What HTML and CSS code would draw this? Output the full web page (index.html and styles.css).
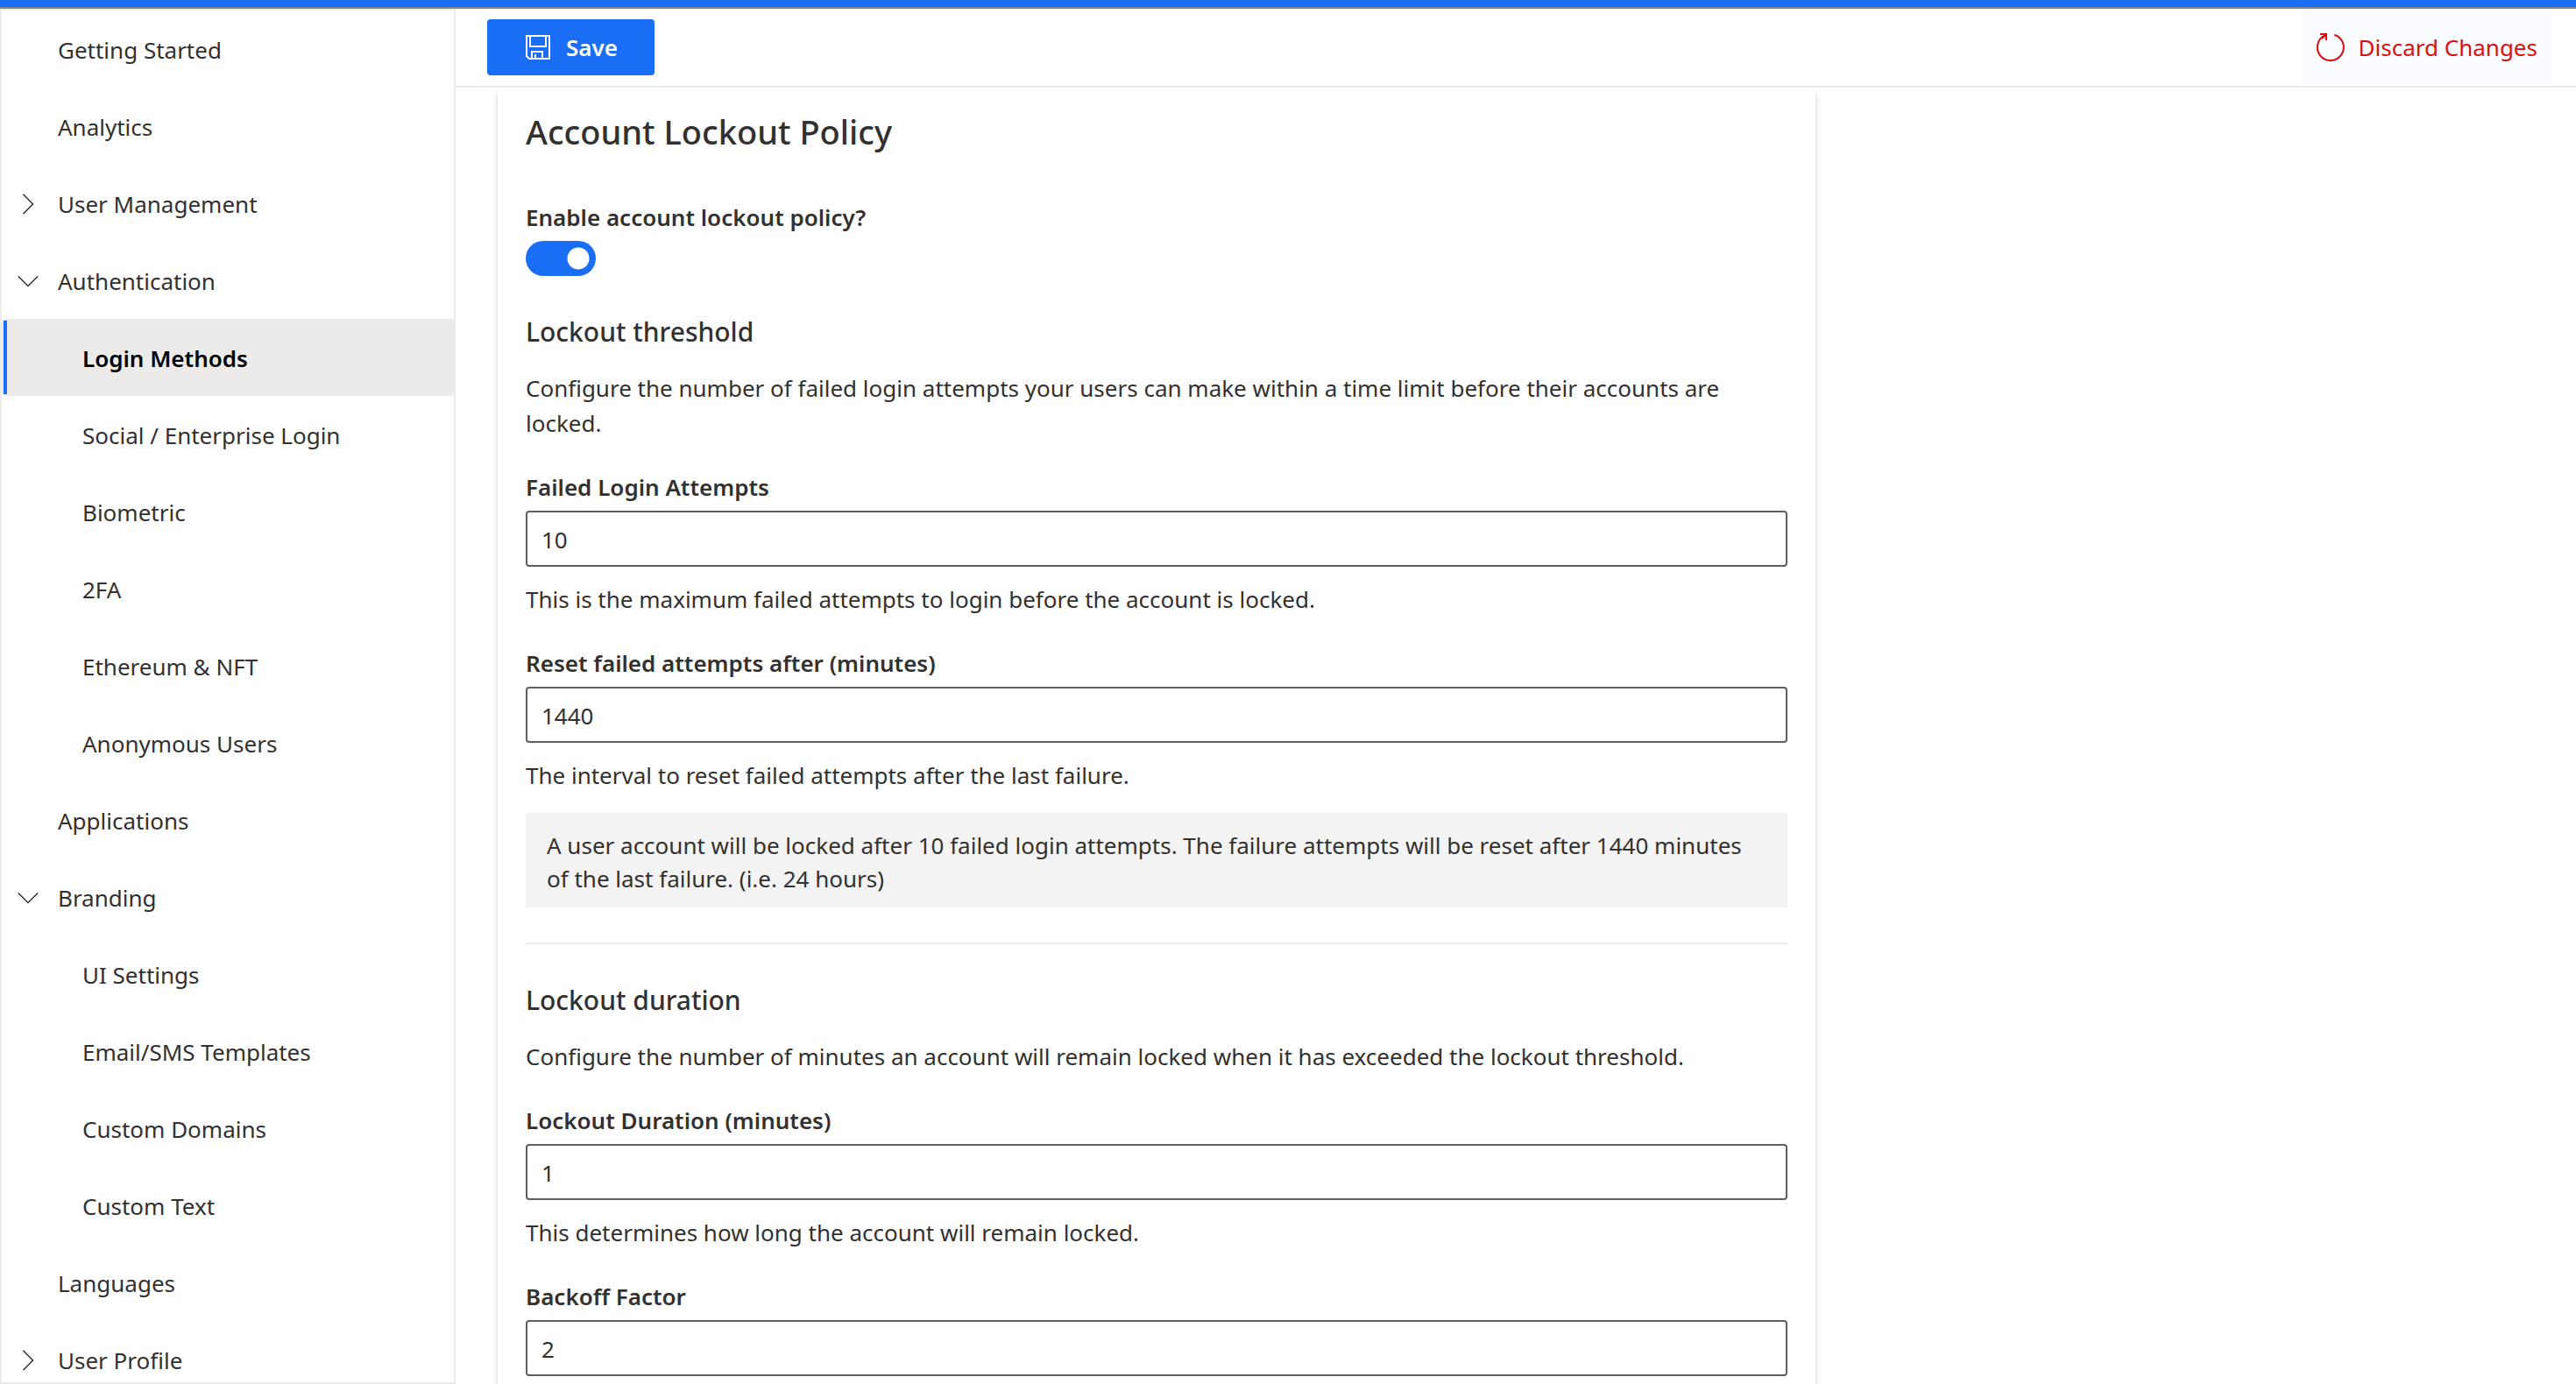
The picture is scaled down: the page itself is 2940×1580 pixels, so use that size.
FILE: index.html
```html
<!DOCTYPE html>
<html lang="en">
<head>
<meta charset="utf-8">
<title>Login Methods</title>
<link rel="stylesheet" href="styles.css">
</head>
<body>
<svg class="sprite" aria-hidden="true">
  <symbol id="chevron-right" viewBox="0 0 24 24"><path d="M6.5 .8 17.5 12 6.5 23.2" fill="none" stroke="currentColor" stroke-width="1.5"/></symbol>
  <symbol id="chevron-down" viewBox="0 0 24 24"><path d="M.8 6.5 12 17.5 23.2 6.5" fill="none" stroke="currentColor" stroke-width="1.5"/></symbol>
</svg>
<header class="topbar"></header>
<div class="shell">
  <nav class="sidebar" aria-label="Main">
    <a class="nav-item" href="#">Getting Started</a>
    <a class="nav-item" href="#">Analytics</a>
    <a class="nav-item nav-group" href="#"><svg class="chevron"><use href="#chevron-right"/></svg>User Management</a>
    <a class="nav-item nav-group" href="#"><svg class="chevron"><use href="#chevron-down"/></svg>Authentication</a>
    <a class="nav-item nav-sub nav-active" href="#" aria-current="page">Login Methods</a>
    <a class="nav-item nav-sub" href="#">Social / Enterprise Login</a>
    <a class="nav-item nav-sub" href="#">Biometric</a>
    <a class="nav-item nav-sub" href="#">2FA</a>
    <a class="nav-item nav-sub" href="#">Ethereum &amp; NFT</a>
    <a class="nav-item nav-sub" href="#">Anonymous Users</a>
    <a class="nav-item" href="#">Applications</a>
    <a class="nav-item nav-group" href="#"><svg class="chevron"><use href="#chevron-down"/></svg>Branding</a>
    <a class="nav-item nav-sub" href="#">UI Settings</a>
    <a class="nav-item nav-sub" href="#">Email/SMS Templates</a>
    <a class="nav-item nav-sub" href="#">Custom Domains</a>
    <a class="nav-item nav-sub" href="#">Custom Text</a>
    <a class="nav-item" href="#">Languages</a>
    <a class="nav-item nav-group" href="#"><svg class="chevron"><use href="#chevron-right"/></svg>User Profile</a>
  </nav>
  <main class="main">
    <div class="toolbar">
      <button class="save" type="button">
        <svg class="save-icon" viewBox="0 0 28 28" fill="none" stroke="currentColor" stroke-width="2"><path d="M1 1H27V27H4L1 24ZM5 1V13H23V1M7 27V19H19V27M11 27V22"/></svg>
        Save
      </button>
      <button class="discard" type="button">
        <svg class="discard-icon" viewBox="0 0 32 32" fill="none" stroke="currentColor" stroke-width="2"><path d="M20.300 1.700A15 15 0 1 1 10 2.200"/><path d="M4 1H11V8M11 1 6 6"/></svg>
        Discard Changes
      </button>
    </div>
    <div class="content">
      <form class="card">
        <h2 class="title">Account Lockout Policy</h2>
        <label class="label" for="enable">Enable account lockout policy?</label>
        <input class="toggle" id="enable" type="checkbox" role="switch" checked>

        <section class="section">
          <h3 class="subtitle">Lockout threshold</h3>
          <p class="description">Configure the number of failed login attempts your users can make within a time limit before their accounts are locked.</p>
          <div class="field">
            <label class="label" for="attempts">Failed Login Attempts</label>
            <input class="input" id="attempts" type="text" value="10">
            <p class="help">This is the maximum failed attempts to login before the account is locked.</p>
          </div>
          <div class="field">
            <label class="label" for="reset">Reset failed attempts after (minutes)</label>
            <input class="input" id="reset" type="text" value="1440">
            <p class="help">The interval to reset failed attempts after the last failure.</p>
          </div>
          <p class="note">A user account will be locked after 10 failed login attempts. The failure attempts will be reset after 1440 minutes of the last failure. (i.e. 24 hours)</p>
        </section>

        <hr class="divider">

        <section class="section">
          <h3 class="subtitle">Lockout duration</h3>
          <p class="description">Configure the number of minutes an account will remain locked when it has exceeded the lockout threshold.</p>
          <div class="field">
            <label class="label" for="duration">Lockout Duration (minutes)</label>
            <input class="input" id="duration" type="text" value="1">
            <p class="help">This determines how long the account will remain locked.</p>
          </div>
          <div class="field">
            <label class="label" for="backoff">Backoff Factor</label>
            <input class="input" id="backoff" type="text" value="2">
          </div>
        </section>
      </form>
    </div>
  </main>
</div>
</body>
</html>
```
FILE: styles.css
```css
* { box-sizing: border-box; }

body {
  margin: 0;
  height: 100vh;
  display: flex;
  flex-direction: column;
  background: #fff;
  color: #323130;
  font: 400 26px/40px "Segoe UI", "Noto Sans", sans-serif;
}

h2, h3, p { margin: 0; }
button, input { font: inherit; color: inherit; margin: 0; }
.sprite { display: none; }

.topbar {
  flex: none;
  height: 10px;
  background: #196ef5;
  border-bottom: 2px solid #848484;
}

.shell { flex: 1; min-height: 0; display: flex; }

.sidebar {
  flex: none;
  width: 520px;
  border: 2px solid #ebebeb;
  overflow: hidden;
}

.nav-item {
  display: flex;
  align-items: center;
  height: 88px;
  padding-top: 2px;
  padding-left: 64px;
  color: inherit;
  text-decoration: none;
}
.nav-group { padding-left: 18px; gap: 22px; }
.chevron { width: 24px; height: 24px; }
.nav-sub { padding-left: 92px; }
.nav-active {
  position: relative;
  background: #edebe9;
  border-radius: 4px;
  color: #000;
  font-weight: 600;
}
.nav-active::before {
  content: "";
  position: absolute;
  inset: 2px auto 2px 2px;
  width: 4px;
  background: #196ef5;
}

.main { flex: 1; min-width: 0; display: flex; flex-direction: column; }

.toolbar {
  flex: none;
  display: flex;
  justify-content: space-between;
  align-items: center;
  height: 90px;
  padding: 0 28px 0 36px;
  border-bottom: 2px solid #ebebeb;
}
.save {
  display: flex;
  align-items: center;
  gap: 18px;
  height: 64px;
  padding: 0 42px 0 44px;
  border: 0;
  border-radius: 4px;
  background: #196ef5;
  color: #fff;
  font-weight: 600;
}
.save-icon { width: 28px; height: 28px; }
.discard {
  display: flex;
  align-items: center;
  gap: 16px;
  height: 88px;
  padding: 0 16px;
  border: 0;
  background: #fbfcff;
  color: #d8100f;
}
.discard-icon { width: 32px; height: 32px; }

.content {
  flex: 1;
  min-height: 0;
  margin-top: 4px;
  padding: 0 48px;
  overflow: hidden;
}
.card {
  max-width: 1504px;
  padding: 20px 32px 40px;
  box-shadow: 0 3px 7px rgba(0, 0, 0, .13), 0 1px 2px rgba(0, 0, 0, .11);
}

.title { margin-bottom: 52px; font-size: 38px; line-height: 52px; font-weight: 500; }
.subtitle { margin-bottom: 23px; font-size: 30px; line-height: 42px; font-weight: 500; }
.label { display: block; margin-bottom: 7px; font-weight: 600; }
.section { margin-top: 43px; }
.field { margin-top: 33px; }

.toggle {
  display: block;
  appearance: none;
  width: 80px;
  height: 40px;
  border-radius: 20px;
  background: radial-gradient(circle at 60px 20px, #fff 12px, #196ef5 13px);
}
.toggle:not(:checked) { background: radial-gradient(circle at 20px 20px, #fff 12px, #605e5c 13px); }

.input {
  display: block;
  width: 100%;
  height: 64px;
  padding: 2px 16px 0;
  border: 2px solid #605e5c;
  border-radius: 4px;
  background: #fff;
}
.help { margin-top: 17px; }
.note { margin-top: 23px; padding: 18px 24px 14px; background: #f3f3f3; line-height: 38px; }
.divider { height: 2px; margin: 40px 0 0; border: 0; background: #ebebeb; }
```
